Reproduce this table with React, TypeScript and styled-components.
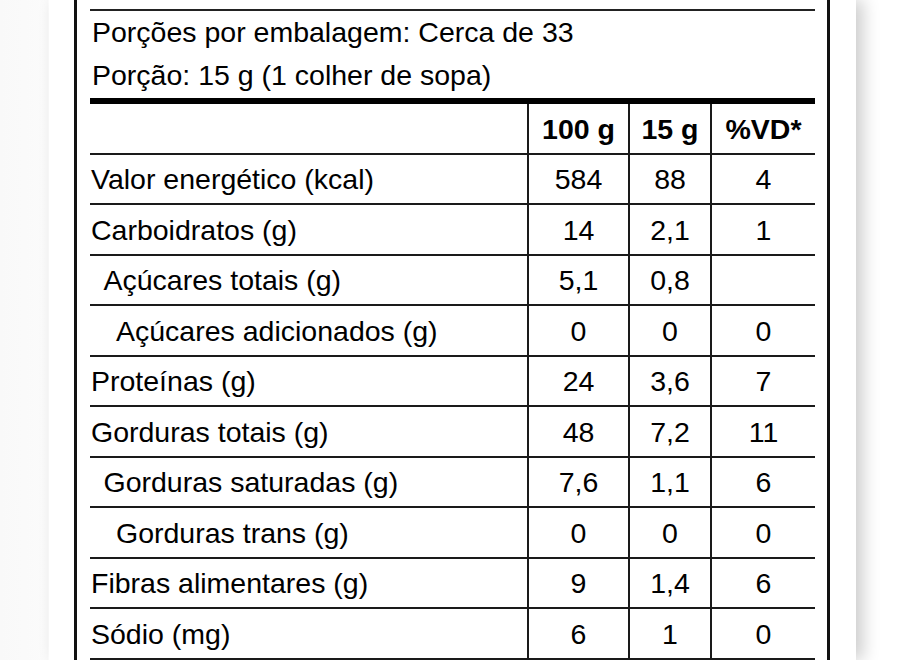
import React from 'react';
import styled, { createGlobalStyle } from 'styled-components';

const GlobalStyle = createGlobalStyle`
  html, body {
    margin: 0;
    padding: 0;
    background: #ffffff;
  }
  body {
    font-family: "Liberation Sans", Arial, Helvetica, sans-serif;
    color: #000;
    overflow: hidden;
  }
`;

const Page = styled.div`
  width: 924px;
  height: 660px;
  overflow: hidden;
  background: linear-gradient(to right, #f9f9f9 0px, #fbfbfb 48px, #ffffff 48px);
`;

const Card = styled.div`
  width: 807px;
  margin-left: 49px;
  padding: 0 26px 0 25px;
  box-sizing: border-box;
  background: #fff;
  box-shadow: 7px 0 16px rgba(0, 0, 0, 0.2);
  min-height: 660px;
`;

const Label = styled.div`
  border-left: 3px solid #111;
  border-right: 3px solid #111;
  padding: 9px 12px 0 13px;
  min-height: 660px;
  box-sizing: border-box;
`;

const Servings = styled.div`
  border-top: 2px solid #222;
  border-bottom: 6px solid #000;
  padding: 0 0 1px 2px;
  font-size: 28.5px;
  line-height: 43px;
`;

const Row = styled.div<{ head?: boolean }>`
  display: grid;
  grid-template-columns: 437px 101px 82px 105px;
  height: 50.5px;
  box-sizing: border-box;
  border-bottom: 2px solid #1a1a1a;
  font-size: 28.5px;
  font-weight: ${(p) => (p.head ? 'bold' : 'normal')};
`;

const NameCell = styled.div<{ level: number }>`
  display: flex;
  align-items: center;
  padding-top: 2px;
  padding-left: ${(p) => 1 + p.level * 12.5}px;
  white-space: nowrap;
`;

const ValueCell = styled.div`
  display: flex;
  align-items: center;
  justify-content: center;
  padding-top: 2px;
  border-left: 2px solid #1a1a1a;
`;

type Nutrient = {
  name: string;
  level: number;
  per100: string;
  perPortion: string;
  vd: string;
};

const nutrients: Nutrient[] = [
  { name: 'Valor energético (kcal)', level: 0, per100: '584', perPortion: '88', vd: '4' },
  { name: 'Carboidratos (g)', level: 0, per100: '14', perPortion: '2,1', vd: '1' },
  { name: 'Açúcares totais (g)', level: 1, per100: '5,1', perPortion: '0,8', vd: '' },
  { name: 'Açúcares adicionados (g)', level: 2, per100: '0', perPortion: '0', vd: '0' },
  { name: 'Proteínas (g)', level: 0, per100: '24', perPortion: '3,6', vd: '7' },
  { name: 'Gorduras totais (g)', level: 0, per100: '48', perPortion: '7,2', vd: '11' },
  { name: 'Gorduras saturadas (g)', level: 1, per100: '7,6', perPortion: '1,1', vd: '6' },
  { name: 'Gorduras trans (g)', level: 2, per100: '0', perPortion: '0', vd: '0' },
  { name: 'Fibras alimentares (g)', level: 0, per100: '9', perPortion: '1,4', vd: '6' },
  { name: 'Sódio (mg)', level: 0, per100: '6', perPortion: '1', vd: '0' },
];

function App() {
  return (
    <>
      <GlobalStyle />
      <Page>
        <Card>
          <Label>
            <Servings>
              <div>Porções por embalagem: Cerca de 33</div>
              <div>Porção: 15 g (1 colher de sopa)</div>
            </Servings>
            <Row head>
              <NameCell level={0} />
              <ValueCell>100 g</ValueCell>
              <ValueCell>15 g</ValueCell>
              <ValueCell>%VD*</ValueCell>
            </Row>
            {nutrients.map((n) => (
              <Row key={n.name}>
                <NameCell level={n.level}>{n.name}</NameCell>
                <ValueCell>{n.per100}</ValueCell>
                <ValueCell>{n.perPortion}</ValueCell>
                <ValueCell>{n.vd}</ValueCell>
              </Row>
            ))}
          </Label>
        </Card>
      </Page>
    </>
  );
}

export default App;
